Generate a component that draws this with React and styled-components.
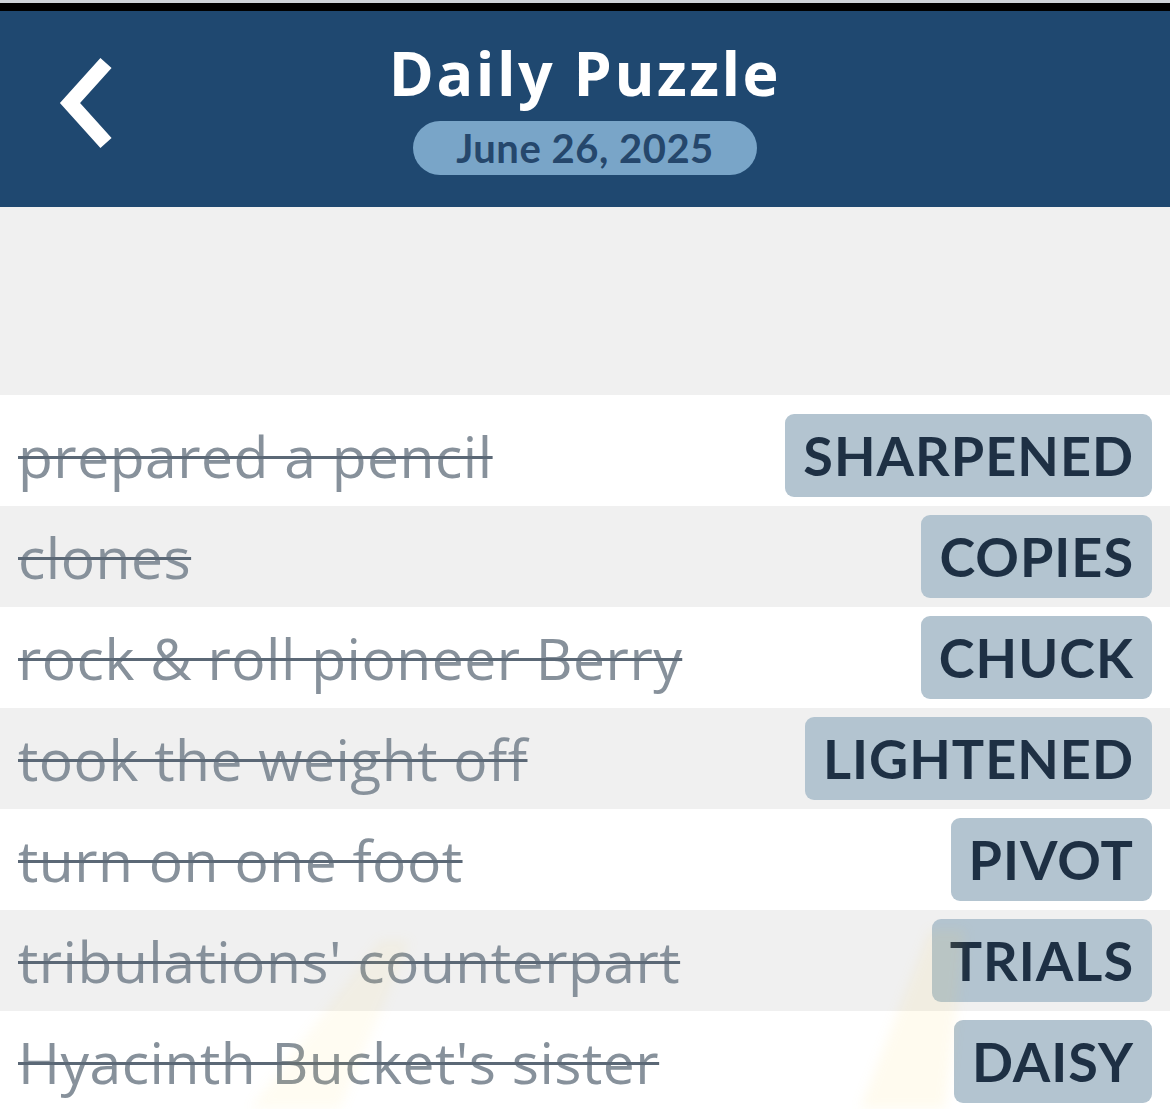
import styled, { createGlobalStyle } from 'styled-components';

const GlobalStyle = createGlobalStyle`
  html, body {
    margin: 0;
    padding: 0;
    background: #f0f0f0;
  }
  * {
    box-sizing: border-box;
  }
`;

const clues = [
  { clue: 'prepared a pencil', answer: 'SHARPENED' },
  { clue: 'clones', answer: 'COPIES' },
  { clue: 'rock & roll pioneer Berry', answer: 'CHUCK' },
  { clue: 'took the weight off', answer: 'LIGHTENED' },
  { clue: 'turn on one foot', answer: 'PIVOT' },
  { clue: "tribulations' counterpart", answer: 'TRIALS' },
  { clue: "Hyacinth Bucket's sister", answer: 'DAISY' },
];

const Page = styled.div`
  position: relative;
  width: 1170px;
  height: 1109px;
  overflow: hidden;
  background: #f0f0f0;
  font-family: Lato, 'Open Sans', sans-serif;
`;

const StatusStrip = styled.div`
  height: 3px;
  background: #cfd4d9;
`;

const BlackBar = styled.div`
  height: 8px;
  background: #000;
`;

const Header = styled.header`
  display: grid;
  grid-template-columns: 1fr auto 1fr;
  align-items: center;
  height: 196px;
  background: #1f4870;
`;

const BackButton = styled.button`
  justify-self: start;
  display: flex;
  align-items: center;
  margin: 0 0 12px 58px;
  padding: 0;
  border: 0;
  background: none;
  cursor: pointer;
`;

const TitleBlock = styled.div`
  display: flex;
  flex-direction: column;
  align-items: center;
  padding-bottom: 6px;
`;

const Title = styled.h1`
  margin: 0;
  color: #fff;
  font-family: 'Open Sans', sans-serif;
  font-weight: 700;
  font-size: 61px;
  line-height: 72px;
  letter-spacing: 2.5px;
`;

const DatePill = styled.div`
  margin-top: 12px;
  width: 344px;
  height: 54px;
  border-radius: 27px;
  background: #79a5c8;
  color: #25476c;
  font-family: Lato, sans-serif;
  font-weight: 700;
  font-size: 40px;
  line-height: 54px;
  text-align: center;
  letter-spacing: 0.5px;
`;

const Spacer = styled.div`
  height: 188px;
  background: #f0f0f0;
`;

const List = styled.ul`
  margin: 0;
  padding: 10px 0 0;
  list-style: none;
  background: #fff;
`;

const Row = styled.li`
  display: flex;
  align-items: center;
  justify-content: space-between;
  height: 101px;
  padding: 0 18px;
  background: ${(p) => (p.$shaded ? '#f0f0f0' : '#fff')};
`;

const Clue = styled.span`
  color: #87919b;
  font-family: 'Open Sans', sans-serif;
  font-weight: 400;
  font-size: 57px;
  letter-spacing: 0.5px;
  text-decoration: line-through;
  text-decoration-color: #5b6876;
  text-decoration-thickness: 3px;
  white-space: nowrap;
`;

const Answer = styled.span`
  display: flex;
  align-items: center;
  height: 83px;
  padding: 0 18px;
  border-radius: 9px;
  background: #b3c4d0;
  color: #1e3044;
  font-family: Lato, sans-serif;
  font-weight: 700;
  font-size: 54px;
  letter-spacing: 1px;
`;

const Watermark = styled.svg`
  position: absolute;
  left: 0;
  top: 900px;
  width: 1170px;
  height: 209px;
  pointer-events: none;
  filter: blur(6px);
`;

const Chevron = () => (
  <svg width="64" height="92" viewBox="0 0 64 92">
    <polyline
      points="48,6 12,46 48,86"
      fill="none"
      stroke="#fff"
      strokeWidth="15"
      strokeLinejoin="miter"
    />
  </svg>
);

const App = () => {
  return (
    <Page>
      <GlobalStyle />
      <StatusStrip />
      <BlackBar />
      <Header>
        <BackButton aria-label="Back">
          <Chevron />
        </BackButton>
        <TitleBlock>
          <Title>Daily Puzzle</Title>
          <DatePill>June 26, 2025</DatePill>
        </TitleBlock>
        <div />
      </Header>
      <Spacer />
      <List>
        {clues.map((c, i) => (
          <Row key={c.answer} $shaded={i % 2 === 1}>
            <Clue>{c.clue}</Clue>
            <Answer>{c.answer}</Answer>
          </Row>
        ))}
      </List>
      <Watermark viewBox="0 0 1170 209">
        <polygon points="250,209 340,209 410,40 380,40" fill="#ffd84a" opacity="0.07" />
        <polygon points="860,209 945,209 965,30 930,30" fill="#ffd84a" opacity="0.09" />
      </Watermark>
    </Page>
  );
};

export default App;
